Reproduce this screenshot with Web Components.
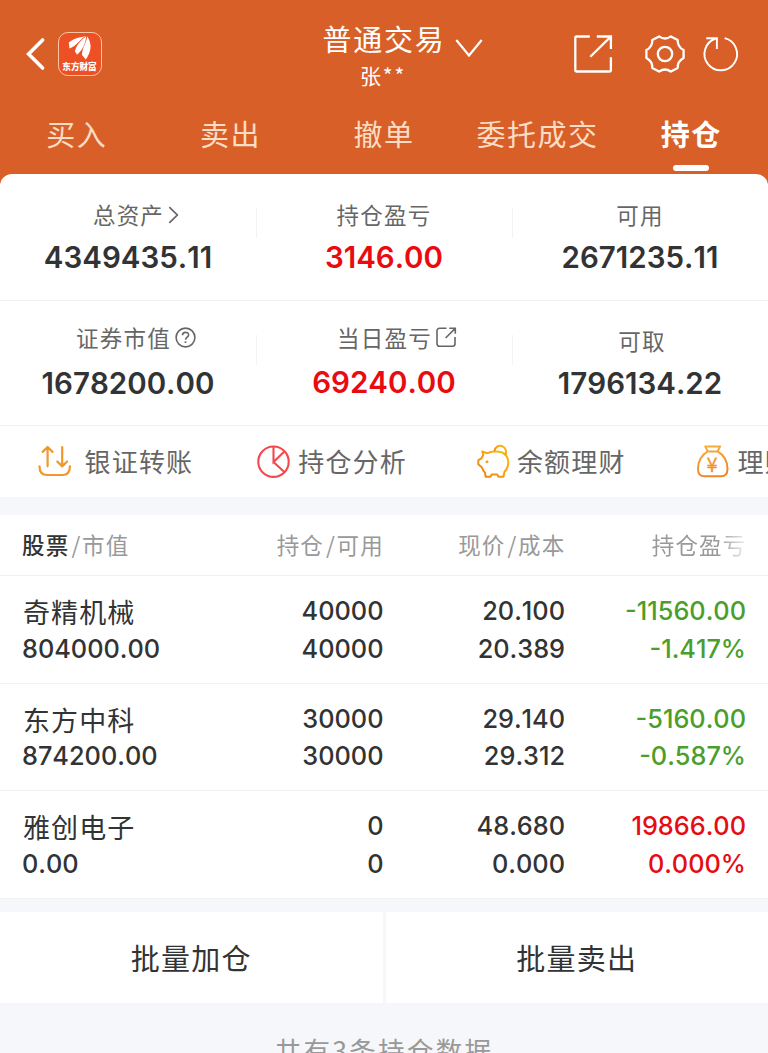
<!DOCTYPE html>
<html lang="zh-CN">
<head>
<meta charset="utf-8">
<title>普通交易</title>
<style>
  html, body {
    margin: 0;
    height: 1053px;
    overflow: hidden;
    background: #f6f7fa;
  }
</style>
</head>
<body>
<trade-app></trade-app>

<script>
const CJK = '"Noto Sans CJK SC", sans-serif'
const NUM = 'Inter, "Noto Sans CJK SC", sans-serif'

const icons = {
  back: `<svg width="19" height="34" viewBox="0 0 19 34" stroke-width="3.6"><path d="M16.6 3 2.6 17l14 14" stroke-linecap="round"/></svg>`,
  down: `<svg width="28" height="20" viewBox="0 0 28 20" stroke-width="2.2"><path d="M1.3 2 14 17.4 26.7 2"/></svg>`,
  share: `<svg width="38" height="38" viewBox="0 0 38 38" stroke-width="2.3"><path d="M15.8 1.5H2.3a1 1 0 0 0-1 1v33a1 1 0 0 0 1 1h33.6a1 1 0 0 0 1-1V22.2M22.8 1.5h14.1V14M36.5 1.9 16.3 21.7"/></svg>`,
  gear: `<svg width="40" height="38" viewBox="-20 -19 40 38" stroke-width="2.3" stroke-linejoin="round"><path d="M18.6-3.9V3.9Q12.4 7.2 12.7 13.9L5.9 17.6Q0 13.4-5.900 17.6L-12.7 13.9Q-12.4 7.2-18.6 3.9V-3.9Q-12.4-7.2-12.7-13.9L-5.9-17.6Q0-13.4 5.9-17.6L12.7-13.9Q12.4-7.2 18.6-3.9Z"/><circle r="7.2"/></svg>`,
  refresh: `<svg width="36" height="36" viewBox="0 0 36 36" stroke-width="1.9"><path d="M21.7 2.2A16.300 16.300 0 1 1 12.800 2.500M3.200 2.300h10.700v10.800"/></svg>`,
  right: `<svg width="11" height="18" viewBox="0 0 11 18" stroke-width="1.7"><path d="m1.300 1.200 8 7.800-8 7.800"/></svg>`,
  help: `<svg width="21" height="21" viewBox="0 0 21 21" stroke-width="1.6"><circle cx="10.5" cy="10.5" r="9.4"/><path d="M7.500 8.300c0-3.900 6.100-3.900 6.100-.3 0 2.200-3 2.300-3 4.700"/><path d="M10.500 14.300v1.700" stroke-width="1.7"/></svg>`,
  open: `<svg width="21" height="21" viewBox="0 0 21 21" stroke-width="1.6"><path d="M10.5 1.3H3.5a2.500 2.500 0 0 0-2.500 2.500v13a2.500 2.500 0 0 0 2.500 2.500h13a2.500 2.500 0 0 0 2.500-2.500V10M13.300 1.300h6v5.500M19 1.600 9.600 11"/></svg>`,
  transfer: `<svg width="34" height="34" viewBox="0 0 34 34" stroke="#f0982b" stroke-width="2.2" stroke-linecap="round" stroke-linejoin="round"><path d="M1.5 21.3c0 6 2.800 8.700 7.500 8.700h15.500c4.700 0 7.400-2.700 7.400-8.700M9.600 21.300V2M4.700 6.900l4.900-4.900 4.900 4.900M24.200 2v19.300M19.300 16.500l4.900 4.900 4.900-4.900"/></svg>`,
  pie: `<svg width="33" height="34" viewBox="0 0 33 34" stroke="#f5474c" stroke-width="2.1"><circle cx="16.5" cy="16.7" r="15.2"/><path d="M16.500 1.500v15.500l10.600-10.300M16.500 17l10.800 10"/></svg>`,
  piggy: `<svg width="33" height="34" viewBox="0 0 33 34" stroke="url(#pig)" stroke-width="2" stroke-linejoin="round"><defs><linearGradient id="pig" x1="0" y1="1" x2="1" y2="0"><stop stop-color="#f07e0e"/><stop offset="1" stop-color="#fbc012"/></linearGradient></defs><path d="M5.200 6.500 10.300 8.300C14 6 21 6 25.200 7.500 29.500 9.600 31.500 14 31.300 18.200 31 22 30 24.500 27.600 26.600L26.400 31.700H21.300L20.300 29.500H14.700L13.400 31.700H8.700L7.900 27.400C6.300 26 5.600 24.500 5 22.600L1.300 19.300V15.300L4.600 13.200C5 12 5.500 11 6.400 10Z"/><path d="M17.500 6A5.800 5.800 0 1 1 28 10"/><circle cx="10" cy="16.700" r="1.500" fill="#f5a21b" stroke="none"/></svg>`,
  bag: `<svg width="32" height="34" viewBox="0 0 32 34" stroke="url(#bag)" stroke-width="2" stroke-linejoin="round"><defs><linearGradient id="bag" x1="0" y1="0" x2=".3" y2="1"><stop stop-color="#f6b13d"/><stop offset="1" stop-color="#f0862a"/></linearGradient></defs><path d="M8.200 1.400H23.200L20.600 6.400H10.800ZM10.800 6.400C5.500 9.500 1 15.500 1 24c0 5 2.500 7.300 6.500 7.300h16.400c4 0 6.600-2.300 6.600-7.300 0-8.500-4.600-14.500-9.900-17.600"/><text x="15.700" y="26.500" text-anchor="middle" font-family="Noto Sans CJK SC" font-size="20" fill="#f2932e" stroke="#f2932e" stroke-width=".3">¥</text></svg>`
}

/**
 * Attaches an open shadow root and fills it from a template.
 */
function render (host, html) {
  const template = document.createElement('template')
  template.innerHTML = html
  host.attachShadow({ mode: 'open' }).appendChild(template.content.cloneNode(true))
}

customElements.define('line-icon',
  class extends HTMLElement {
    connectedCallback () {
      render(this, `
        <style>
          :host { display: block; flex: none; }
          svg { display: block; fill: none; overflow: visible; }
          svg:not([stroke]) { stroke: currentColor; }
        </style>
        ${icons[this.getAttribute('name')]}`)
    }
  }
)

customElements.define('brand-logo',
  class extends HTMLElement {
    connectedCallback () {
      render(this, `
        <style>
          :host {
            display: flex;
            flex-direction: column;
            align-items: center;
            box-sizing: border-box;
            width: 44px;
            height: 44px;
            padding-top: 3px;
            border: 1px solid #fbc6a2;
            border-radius: 10px;
            background: #ec5024;
            color: #fff;
          }
          svg { display: block; fill: #fff; }
          span {
            font: 900 8.6px/13px ${CJK};
            white-space: nowrap;
          }
        </style>
        <svg width="24" height="24" viewBox="0 0 24 24">
          <path d="M.8 6.500C5 3 10 1.300 17.500.300 12 3 9.500 9.500 1.500 12.500Z"/>
          <path d="M7 15.500C7.500 11 12 4.500 18.300.300 17.500 7 15 14 9 18.800Z"/>
          <path d="M14 19C14 12 18 8 19.300.500 25 9 22.500 17 17.800 23.500Z"/>
        </svg>
        <span><slot></slot></span>`)
    }
  }
)

customElements.define('trade-header',
  class extends HTMLElement {
    connectedCallback () {
      render(this, `
        <style>
          :host {
            display: grid;
            grid-template-columns: 256px 256px 256px;
            height: 96px;
            color: #fff;
          }
          .left {
            display: flex;
            align-items: center;
            gap: 12.5px;
            height: 107px;
            padding-left: 26px;
          }
          .title {
            display: flex;
            flex-direction: column;
            align-items: center;
            padding: 18px 2px 0 0;
          }
          .name {
            display: flex;
            align-items: center;
            font: 400 29px/40px ${CJK};
            letter-spacing: 1.8px;
          }
          .name line-icon { margin: 20px -39px 0 9px; }
          .user {
            font: 400 21px/34px ${CJK};
            letter-spacing: 1.8px;
          }
          .tools {
            display: flex;
            align-items: center;
            justify-content: flex-end;
            height: 108px;
            padding-right: 29px;
          }
          .tools line-icon + line-icon { margin-left: 33px; }
          .tools line-icon:last-child { margin-left: 18px; }
        </style>
        <div class="left">
          <line-icon name="back"></line-icon>
          <brand-logo>东方财富</brand-logo>
        </div>
        <div class="title">
          <div class="name"><slot></slot><line-icon name="down"></line-icon></div>
          <div class="user"><slot name="user"></slot></div>
        </div>
        <div class="tools">
          <line-icon name="share"></line-icon>
          <line-icon name="gear"></line-icon>
          <line-icon name="refresh"></line-icon>
        </div>`)
    }
  }
)

customElements.define('trade-tab',
  class extends HTMLElement {
    connectedCallback () {
      render(this, `
        <style>
          :host {
            display: flex;
            flex-direction: column;
            align-items: center;
            padding-top: 17px;
            color: #fbdcc4;
            font: 400 29px/40px ${CJK};
            letter-spacing: 1.5px;
            white-space: nowrap;
          }
          :host([active]) {
            color: #fff;
            font-weight: 700;
          }
          :host([active])::after {
            content: "";
            width: 36px;
            height: 6px;
            margin-top: 12px;
            border-radius: 3px;
            background: #fff;
          }
        </style>
        <slot></slot>`)
    }
  }
)

customElements.define('asset-cell',
  class extends HTMLElement {
    connectedCallback () {
      const icon = this.getAttribute('icon')
      render(this, `
        <style>
          :host {
            display: flex;
            flex-direction: column;
            align-items: center;
            position: relative;
            box-sizing: border-box;
            padding-top: 25px;
            border-bottom: 1px solid #f2f2f3;
            color: #323334;
          }
          :host([split])::before {
            content: "";
            position: absolute;
            left: 0;
            top: 34px;
            width: 1px;
            height: 30px;
            background: #f3f3f4;
          }
          :host([tone="up"]) { color: #e90b10; }
          .label {
            display: flex;
            align-items: center;
            color: #666;
            font: 400 22.5px/30px ${CJK};
            letter-spacing: 1.2px;
            margin: var(--drop, 0) 0 0 var(--shift, 0);
          }
          .label line-icon { margin: 1px -30px 0 4px; }
          .value {
            margin-top: var(--value-top, 10px);
            font: 600 29.5px/36px ${NUM};
            font-kerning: none;
          }
        </style>
        <div class="label"><slot name="label"></slot>${icon ? `<line-icon name="${icon}"></line-icon>` : ''}</div>
        <div class="value"><slot></slot></div>`)
    }
  }
)

customElements.define('quick-action',
  class extends HTMLElement {
    connectedCallback () {
      render(this, `
        <style>
          :host {
            display: flex;
            flex: none;
            align-items: center;
            gap: var(--gap, 7px);
            width: 219.7px;
            color: #666;
            font: 400 26px/36px ${CJK};
            letter-spacing: 1.2px;
            white-space: nowrap;
          }
          span { margin-top: -2px; }
        </style>
        <line-icon name="${this.getAttribute('icon')}"></line-icon>
        <span><slot></slot></span>`)
    }
  }
)

customElements.define('holding-row',
  class extends HTMLElement {
    connectedCallback () {
      const [name, value, held, usable, price, cost, profit, rate] = this.getAttribute('data').split(',')
      render(this, `
        <style>
          :host {
            display: grid;
            grid-template-columns: 180.5px 181px 181.5px 181px;
            grid-template-rows: 37.5px 37.5px;
            box-sizing: border-box;
            height: 107.5px;
            padding: 16px 0 0 22px;
            border-bottom: 1px solid #f3f3f4;
            color: #323334;
            font: 500 25.3px/38px ${NUM};
            font-kerning: none;
            text-align: right;
          }
          .first { text-align: left; }
          .name {
            padding: 1px 0 0 1px;
            font: 400 27px/38px ${CJK};
            letter-spacing: 1.1px;
          }
          .profit { color: #4b9e2b; }
          :host([tone="up"]) .profit { color: #e60c12; }
        </style>
        <span class="first name">${name}</span><span>${held}</span><span>${price}</span><span class="profit">${profit}</span>
        <span class="first">${value}</span><span>${usable}</span><span>${cost}</span><span class="profit">${rate}</span>`)
    }
  }
)

customElements.define('holding-head',
  class extends HTMLElement {
    connectedCallback () {
      render(this, `
        <style>
          :host {
            display: grid;
            grid-template-columns: 181px 181px 181.5px 181px;
            box-sizing: border-box;
            height: 61px;
            padding: 14px 0 0 22px;
            border-bottom: 1px solid #efeff0;
            color: #999;
            font: 400 22.5px/31px ${CJK};
            letter-spacing: 1.2px;
            text-align: right;
          }
          .first { text-align: left; }
          b { color: #323334; font-weight: 500; }
          i {
            margin: 0 .5px 0 2px;
            font-style: normal;
          }
          .fade {
            -webkit-mask-image: linear-gradient(90deg, #000 152px, transparent 186px);
            mask-image: linear-gradient(90deg, #000 152px, transparent 186px);
          }
        </style>
        <span class="first"><b>股票</b><i>/</i>市值</span>
        <span>持仓<i>/</i>可用</span>
        <span>现价<i>/</i>成本</span>
        <span class="fade">持仓盈亏</span>`)
    }
  }
)

customElements.define('batch-button',
  class extends HTMLElement {
    connectedCallback () {
      render(this, `
        <style>
          :host {
            flex: 1;
            box-sizing: border-box;
            height: 91px;
            padding-top: 25px;
            background: #fff;
            color: #323334;
            font: 400 29px/40px ${CJK};
            letter-spacing: 1.2px;
            text-align: center;
          }
        </style>
        <slot></slot>`)
    }
  }
)

customElements.define('trade-app',
  class extends HTMLElement {
    connectedCallback () {
      render(this, `
        <style>
          :host {
            display: block;
            width: 768px;
            height: 1053px;
            overflow: hidden;
            background: #f6f7fa;
          }
          .top { background: #d86028; height: 190px; }
          .tabs {
            display: grid;
            grid-template-columns: repeat(5, 1fr);
            height: 78px;
          }
          .panel {
            margin-top: -16px;
            height: 323px;
            border-radius: 12px 12px 0 0;
            background: #fff;
            overflow: hidden;
          }
          .assets {
            display: grid;
            grid-template-columns: repeat(3, 256px);
            grid-template-rows: 127px 125px;
          }
          .actions {
            display: flex;
            height: 71px;
            padding-left: 37.5px;
          }
          .holdings {
            margin-top: 18px;
            background: #fff;
          }
          .batch {
            display: flex;
            gap: 3px;
            margin-top: 13.5px;
          }
          .total {
            margin-top: 27px;
            color: #999;
            font: 400 26.5px/40px ${CJK};
            letter-spacing: 2.3px;
            text-align: center;
          }
        </style>
        <div class="top">
          <trade-header>普通交易<span slot="user">张**</span></trade-header>
          <nav class="tabs">
            <trade-tab>买入</trade-tab>
            <trade-tab>卖出</trade-tab>
            <trade-tab>撤单</trade-tab>
            <trade-tab>委托成交</trade-tab>
            <trade-tab active>持仓</trade-tab>
          </nav>
        </div>
        <section class="panel">
          <div class="assets">
            <asset-cell icon="right" style="--shift: -14px"><span slot="label">总资产</span>4349435.11</asset-cell>
            <asset-cell split tone="up"><span slot="label">持仓盈亏</span>3146.00</asset-cell>
            <asset-cell split><span slot="label">可用</span>2671235.11</asset-cell>
            <asset-cell icon="help" style="--shift: -14px; --drop: -4px; --value-top: 13px"><span slot="label">证券市值</span>1678200.00</asset-cell>
            <asset-cell split tone="up" icon="open" style="--shift: -4px; --drop: -4px; --value-top: 12px"><span slot="label">当日盈亏</span>69240.00</asset-cell>
            <asset-cell split style="--shift: 4px; --drop: -1px; --value-top: 10px"><span slot="label">可取</span>1796134.22</asset-cell>
          </div>
          <div class="actions">
            <quick-action icon="transfer" style="--gap: 13px">银证转账</quick-action>
            <quick-action icon="pie" style="--gap: 8px">持仓分析</quick-action>
            <quick-action icon="piggy">余额理财</quick-action>
            <quick-action icon="bag" style="--gap: 9px">理财</quick-action>
          </div>
        </section>
        <section class="holdings">
          <holding-head></holding-head>
          <holding-row data="奇精机械,804000.00,40000,40000,20.100,20.389,-11560.00,-1.417%"></holding-row>
          <holding-row data="东方中科,874200.00,30000,30000,29.140,29.312,-5160.00,-0.587%"></holding-row>
          <holding-row tone="up" data="雅创电子,0.00,0,0,48.680,0.000,19866.00,0.000%"></holding-row>
        </section>
        <div class="batch">
          <batch-button>批量加仓</batch-button>
          <batch-button>批量卖出</batch-button>
        </div>
        <div class="total">共有3条持仓数据</div>`)
    }
  }
)
</script>
</body>
</html>
